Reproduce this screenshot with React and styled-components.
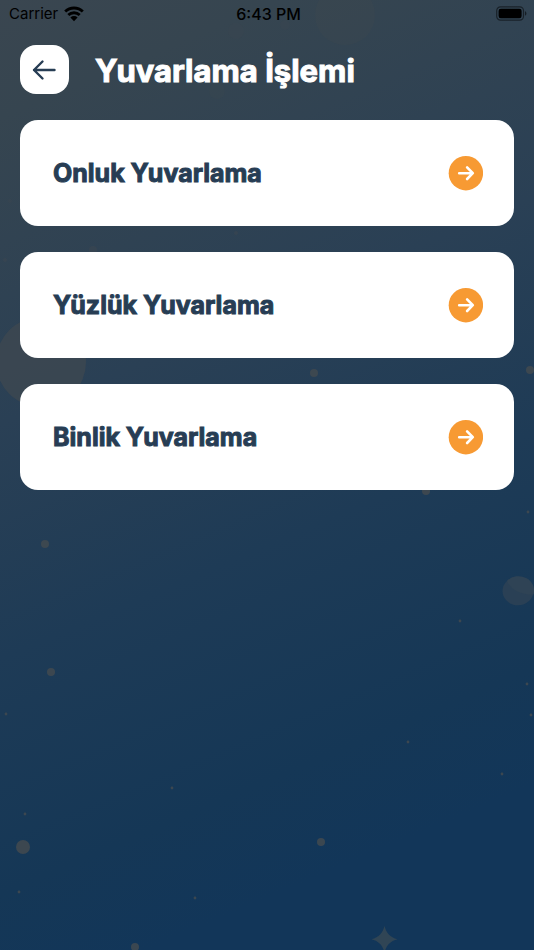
import React from 'react';
import styled, { createGlobalStyle } from 'styled-components';

const GlobalStyles = createGlobalStyle`
  *,
  *::before,
  *::after {
    box-sizing: border-box;
  }

  body {
    margin: 0;
    background-color: #123659;
    font-family: Inter, 'Liberation Sans', sans-serif;
  }
`;

const ScreenStyles = styled.div`
  position: relative;
  min-height: 100vh;
  overflow: hidden;
  isolation: isolate;
  background: linear-gradient(
    157deg,
    #3a4650 0%,
    #364550 10%,
    #2a4055 36%,
    #1e3b56 56%,
    #153756 76%,
    #123659 86%
  );
`;

const SkyStyles = styled.svg`
  position: absolute;
  z-index: -1;
  inset: 0;
  width: 100%;
  height: 100%;
`;

const StatusBarStyles = styled.div`
  display: grid;
  grid-template-columns: 1fr auto 1fr;
  align-items: center;
  height: 28px;
  padding: 0 6px 0 9px;
  color: #000;
  font-size: 15px;
  line-height: 20px;

  .status__carrier {
    display: flex;
    align-items: center;
    gap: 6px;
  }

  .status__time {
    font-size: 16px;
    font-weight: 500;
  }

  .status__battery {
    justify-self: end;
  }

  svg {
    display: block;
  }
`;

const HeaderStyles = styled.header`
  display: flex;
  align-items: center;
  gap: 26px;
  padding: 17px 20px 26px;
`;

const BackButton = styled.button`
  display: flex;
  flex: none;
  align-items: center;
  justify-content: center;
  width: 49px;
  height: 49px;
  padding: 0;
  border: 0;
  border-radius: 16px;
  background-color: #fff;
  color: #273d54;
  cursor: pointer;
`;

const Title = styled.h1`
  margin: 0;
  padding-top: 2px;
  color: #fff;
  font-size: 31px;
  font-weight: 700;
  line-height: 40px;
  -webkit-text-stroke: 1px #fff;
`;

const CardList = styled.nav`
  display: grid;
  gap: 26px;
  padding: 0 20px 26px;
`;

const Card = styled.a`
  display: flex;
  align-items: center;
  justify-content: space-between;
  min-height: 106px;
  padding: 20px 31px 20px 33px;
  border-radius: 18px;
  background-color: #fff;
  color: #273d54;
  font-size: 25px;
  font-weight: 700;
  line-height: 32px;
  text-decoration: none;
  -webkit-text-stroke: 1px #273d54;

  svg {
    flex: none;
  }
`;

const dots = [
  { x: 345, y: 15, r: 30, opacity: 0.3 },
  { x: 236, y: 31, r: 8, opacity: 0.15 },
  { x: 285, y: 25, r: 5, opacity: 0.15 },
  { x: 217, y: 91, r: 8, opacity: 0.2 },
  { x: 10, y: 201, r: 2, opacity: 0.3 },
  { x: 236, y: 233, r: 2, opacity: 0.4 },
  { x: 93, y: 250, r: 4, opacity: 0.4 },
  { x: 5, y: 260, r: 2, opacity: 0.4 },
  { x: 41, y: 362, r: 45, opacity: 0.7 },
  { x: 314, y: 373, r: 4 },
  { x: 530, y: 370, r: 4 },
  { x: 426, y: 491, r: 4 },
  { x: 528, y: 512, r: 1.4 },
  { x: 45, y: 544, r: 4 },
  { x: 460, y: 621, r: 1.4 },
  { x: 51, y: 672, r: 4 },
  { x: 527, y: 684, r: 1.4 },
  { x: 6, y: 714, r: 1.4 },
  { x: 531, y: 715, r: 1.4 },
  { x: 408, y: 742, r: 1.4 },
  { x: 502, y: 774, r: 1.4 },
  { x: 172, y: 788, r: 1.4 },
  { x: 25, y: 814, r: 1.4 },
  { x: 321, y: 842, r: 4 },
  { x: 23, y: 847, r: 7 },
  { x: 19, y: 892, r: 1.4 },
  { x: 195, y: 898, r: 1.4 },
  { x: 135, y: 947, r: 4 },
];

const roundings = [
  { id: 'onluk', label: 'Onluk Yuvarlama' },
  { id: 'yuzluk', label: 'Yüzlük Yuvarlama' },
  { id: 'binlik', label: 'Binlik Yuvarlama' },
];

function Sky() {
  return (
    <SkyStyles
      viewBox="0 0 534 950"
      preserveAspectRatio="xMidYMid slice"
      aria-hidden="true"
    >
      <g fill="#404950">
        {dots.map(({ x, y, r, opacity = 0.9 }) => (
          <circle key={`${x}-${y}`} cx={x} cy={y} r={r} opacity={opacity} />
        ))}
      </g>
      {/* planet */}
      <ellipse cx="518" cy="591" rx="15.5" ry="14.3" fill="#2a4055" />
      <path
        d="M507 581c4 9 14 14 26.5 13.5a15.500 14.300 0 0 0-26.500-13.500z"
        fill="#2f4355"
      />
      {/* star */}
      <path
        d="M384.500 926c1.800 7 5.500 11.300 13 13.300-7.500 2-11.200 6-13 13.300-1.800-7.300-5.500-11.300-13-13.300 7.500-2 11.200-6.300 13-13.300z"
        fill="#304555"
      />
    </SkyStyles>
  );
}

function WifiIcon() {
  return (
    <svg width="20" height="16" viewBox="0 0 20 16" aria-hidden="true">
      <g fill="none" stroke="#000" strokeWidth="2.8">
        <path d="M1.200 5.600a12.500 12.500 0 0 1 17.600 0" />
        <path d="M4.300 9.100a8.100 8.100 0 0 1 11.400 0" />
      </g>
      <path d="M6.400 11.500a5.100 5.100 0 0 1 7.200 0L10 15.200z" />
    </svg>
  );
}

function BatteryIcon() {
  return (
    <svg width="32" height="16" viewBox="0 0 32 16" aria-hidden="true">
      <rect
        x="0.7"
        y="0.9"
        width="26.8"
        height="13.2"
        rx="3.8"
        fill="none"
        stroke="#000"
        strokeOpacity="0.5"
        strokeWidth="1.2"
      />
      <rect x="2.6" y="2.7" width="23" height="9.6" rx="2.2" />
      <path d="M29 5.300c1.900.7 1.900 3.700 0 4.400z" fillOpacity="0.55" />
    </svg>
  );
}

function BackIcon() {
  return (
    <svg width="25" height="22" viewBox="0 0 25 22" aria-hidden="true">
      <path
        d="M22.500 11H2M10.500 2.500 2 11l8.500 8.500"
        fill="none"
        stroke="currentColor"
        strokeWidth="2.4"
        strokeLinecap="round"
        strokeLinejoin="round"
      />
    </svg>
  );
}

function GoIcon() {
  return (
    <svg width="35" height="35" viewBox="0 0 35 35" aria-hidden="true">
      <circle cx="17.9" cy="17.2" r="17.2" fill="#f79a33" />
      <path
        d="M11.200 17.200h13.500M19.100 11.400l5.700 5.800-5.700 5.800"
        fill="none"
        stroke="#fff"
        strokeWidth="2.6"
        strokeLinecap="round"
        strokeLinejoin="round"
      />
    </svg>
  );
}

function StatusBar() {
  return (
    <StatusBarStyles>
      <div className="status__carrier">
        <span>Carrier</span>
        <WifiIcon />
      </div>
      <span className="status__time">6:43 PM</span>
      <div className="status__battery">
        <BatteryIcon />
      </div>
    </StatusBarStyles>
  );
}

export default function App() {
  return (
    <>
      <GlobalStyles />
      <ScreenStyles>
        <Sky />
        <StatusBar />
        <HeaderStyles>
          <BackButton type="button" aria-label="Geri">
            <BackIcon />
          </BackButton>
          <Title>Yuvarlama İşlemi</Title>
        </HeaderStyles>
        <main>
          <CardList aria-label="Yuvarlama İşlemi">
            {roundings.map((rounding) => (
              <Card key={rounding.id} href={`#${rounding.id}`}>
                {rounding.label}
                <GoIcon />
              </Card>
            ))}
          </CardList>
        </main>
      </ScreenStyles>
    </>
  );
}
